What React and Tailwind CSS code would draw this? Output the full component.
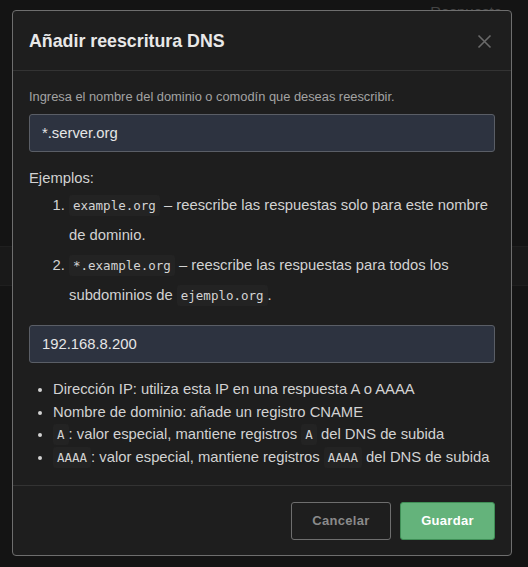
import React from "react";

const Code = ({ children }) => (
  <code className="rounded-[3px] bg-[#232323] px-[4px] py-[3px] text-[12.5px] leading-[0] text-[#d4d4d4] [font-family:'DejaVu_Sans_Mono',monospace]">
    {children}
  </code>
);

export default function App() {
  return (
    <div className="relative h-[567px] w-[528px] overflow-hidden bg-[#141414] [font-family:'Liberation_Sans',Arial,sans-serif]">
      {/* background page */}
      <div className="flex flex-col">
        <div className="flex h-[40px] justify-end pr-[26px] pt-[1px] text-[15px] text-[#444]">Respuesta</div>
        <div className="h-[206px]" />
        <div className="h-[40px] border-y border-[#1f1f1f] bg-[#191919]" />
      </div>

      {/* modal */}
      <div className="absolute left-[12px] top-[10px] flex w-[500px] flex-col rounded-[4px] border border-[#6e6e6e] bg-[#1e1e1e]">
        <div className="flex h-[60px] items-center justify-between border-b border-[#333] pl-[16px] pr-[19px]">
          <h2 className="pt-[1px] text-[17.8px] font-bold text-[#e8e8e8]">Añadir reescritura DNS</h2>
          <svg width="15" height="15" viewBox="0 0 15 15" className="mt-[2px]">
            <path d="M1.5 1.5 L13.5 13.5 M13.5 1.5 L1.5 13.5" stroke="#6a6a6a" strokeWidth="1.6" />
          </svg>
        </div>

        <div className="flex flex-col px-[16px] pb-[17px] pt-[16px]">
          <p className="text-[12.85px] leading-[20px] text-[#a3a3a3]">
            Ingresa el nombre del dominio o comodín que deseas reescribir.
          </p>
          <div className="mt-[7px] flex h-[38px] items-center rounded-[3px] border border-[#5a5e66] bg-[#2d3340] px-[12px] text-[14.8px] text-[#e6e6e6]">
            *.server.org
          </div>

          <div className="mt-[14px] text-[14.8px] leading-[24px] text-[#d2d2d2]">Ejemplos:</div>
          <ol className="list-decimal pl-[40px] text-[14.8px] leading-[30px] text-[#d2d2d2]">
            <li>
              <Code>example.org</Code> – reescribe las respuestas solo para este nombre de dominio.
            </li>
            <li>
              <Code>*.example.org</Code> – reescribe las respuestas para todos los subdominios de{" "}
              <Code>ejemplo.org</Code>.
            </li>
          </ol>

          <div className="mt-[15px] flex h-[38px] items-center rounded-[3px] border border-[#5a5e66] bg-[#2d3340] px-[12px] text-[14.8px] text-[#e6e6e6]">
            192.168.8.200
          </div>

          <ul className="mt-[15px] list-disc pl-[24px] text-[14.8px] leading-[22.5px] text-[#d2d2d2]">
            <li>Dirección IP: utiliza esta IP en una respuesta A o AAAA</li>
            <li>Nombre de dominio: añade un registro CNAME</li>
            <li className="whitespace-nowrap">
              <Code>A</Code>: valor especial, mantiene registros <Code>A</Code> del DNS de subida
            </li>
            <li className="whitespace-nowrap">
              <Code>AAAA</Code>: valor especial, mantiene registros <Code>AAAA</Code> del DNS de subida
            </li>
          </ul>
        </div>

        <div className="flex justify-end gap-[9px] border-t border-[#333] px-[16px] pb-[15px] pt-[16px]">
          <button className="h-[38px] w-[100px] rounded-[3px] border border-[#6e6e6e] text-[13px] font-bold tracking-[0.3px] text-[#8a8a8a]">
            Cancelar
          </button>
          <button className="h-[38px] w-[95px] rounded-[3px] border border-[#3f8f56] bg-[#64b37b] text-[13px] font-bold tracking-[0.3px] text-white">
            Guardar
          </button>
        </div>
      </div>
    </div>
  );
}
